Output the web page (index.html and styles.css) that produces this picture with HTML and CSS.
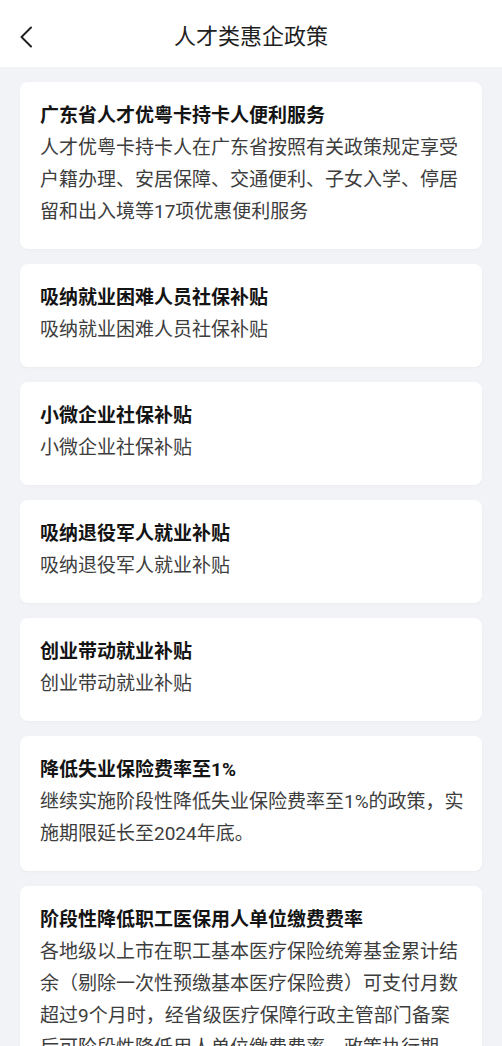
FILE: index.html
```html
<!DOCTYPE html>
<html lang="zh-CN">
<head>
<meta charset="utf-8">
<title>人才类惠企政策</title>
<link rel="stylesheet" href="styles.css">
</head>
<body>
<header class="topbar">
  <button class="back" aria-label="返回">
    <svg width="14" height="22" viewBox="0 0 14 22"><path d="M12 1.5 L2.5 11 L12 20.5" fill="none" stroke="#222" stroke-width="2" stroke-linecap="round" stroke-linejoin="round"/></svg>
  </button>
  <h1 class="title">人才类惠企政策</h1>
</header>
<main class="list">
  <section class="card">
    <h2 class="card-title">广东省人才优粤卡持卡人便利服务</h2>
    <p class="card-desc">人才优粤卡持卡人在广东省按照有关政策规定享受户籍办理、安居保障、交通便利、子女入学、停居留和出入境等17项优惠便利服务</p>
  </section>
  <section class="card">
    <h2 class="card-title">吸纳就业困难人员社保补贴</h2>
    <p class="card-desc">吸纳就业困难人员社保补贴</p>
  </section>
  <section class="card">
    <h2 class="card-title">小微企业社保补贴</h2>
    <p class="card-desc">小微企业社保补贴</p>
  </section>
  <section class="card">
    <h2 class="card-title">吸纳退役军人就业补贴</h2>
    <p class="card-desc">吸纳退役军人就业补贴</p>
  </section>
  <section class="card">
    <h2 class="card-title">创业带动就业补贴</h2>
    <p class="card-desc">创业带动就业补贴</p>
  </section>
  <section class="card">
    <h2 class="card-title">降低失业保险费率至1%</h2>
    <p class="card-desc">继续实施阶段性降低失业保险费率至1%的政策，实施期限延长至2024年底。</p>
  </section>
  <section class="card">
    <h2 class="card-title">阶段性降低职工医保用人单位缴费费率</h2>
    <p class="card-desc">各地级以上市在职工基本医疗保险统筹基金累计结余（剔除一次性预缴基本医疗保险费）可支付月数超过9个月时，经省级医疗保障行政主管部门备案后可阶段性降低用人单位缴费费率，政策执行期2024年1月1日至2024年12月31日。</p>
  </section>
</main>
</body>
</html>
```

FILE: styles.css
```css
html, body {
  margin: 0;
  padding: 0;
}
body {
  background: #f1f3f6;
  font-family: Roboto, "Noto Sans CJK SC", "Noto Sans", sans-serif;
  color: #222;
}
.topbar {
  height: 67px;
  background: #fff;
  display: flex;
  align-items: center;
  justify-content: center;
  position: relative;
}
.back {
  position: absolute;
  left: 19px;
  top: 26px;
  width: 14px;
  height: 22px;
  padding: 0;
  border: 0;
  background: none;
  display: flex;
}
.title {
  margin: 0;
  font-size: 22px;
  font-weight: 400;
  color: #1f1f1f;
  line-height: 30px;
  margin-top: 6px;
}
.list {
  display: flex;
  flex-direction: column;
  gap: 15px;
  padding: 15px 20px 20px;
}
.card {
  background: #fff;
  border-radius: 8px;
  padding: 18px 15px 21px 20px;
  box-shadow: 0 1px 3px rgba(0, 0, 0, 0.03);
}
.card-title {
  margin: 0;
  font-size: 19px;
  line-height: 32px;
  font-weight: 700;
  color: #141414;
}
.card-desc {
  margin: 0;
  font-size: 19px;
  line-height: 32px;
  font-weight: 400;
  color: #3d3d3d;
}
```
